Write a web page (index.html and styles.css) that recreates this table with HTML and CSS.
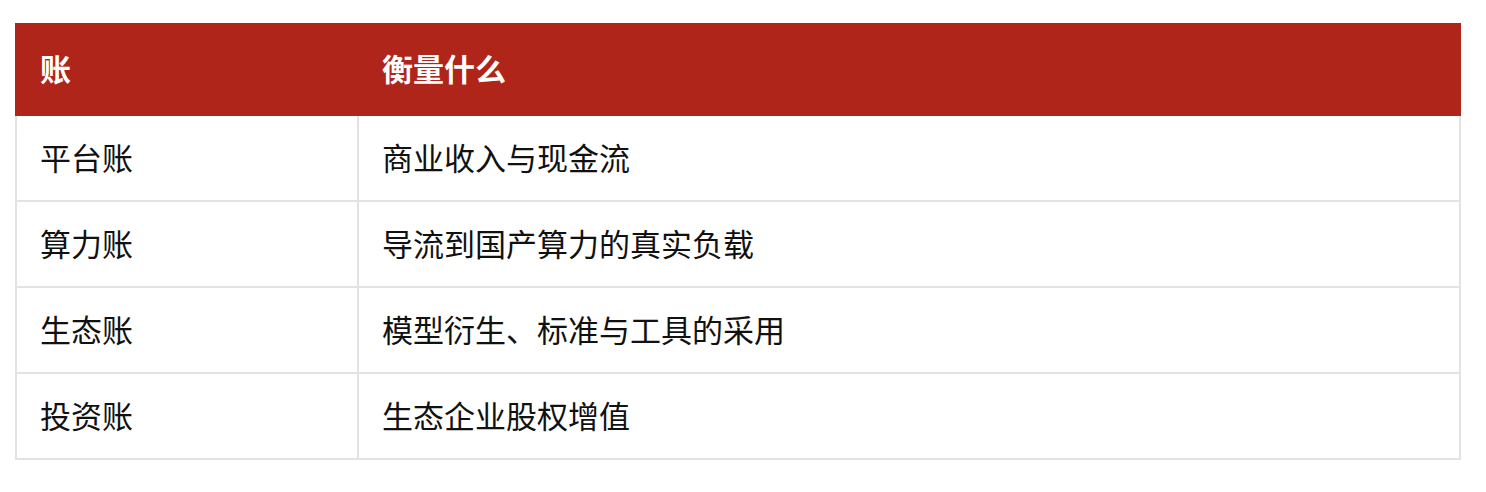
FILE: index.html
```html
<!DOCTYPE html>
<html lang="zh">
<head>
<meta charset="utf-8">
<link rel="stylesheet" href="styles.css">
</head>
<body>
<div class="wrap">
<table class="ledger">
  <thead>
    <tr><th class="c1">账</th><th>衡量什么</th></tr>
  </thead>
  <tbody>
    <tr><td class="c1">平台账</td><td>商业收入与现金流</td></tr>
    <tr><td class="c1">算力账</td><td>导流到国产算力的真实负载</td></tr>
    <tr><td class="c1">生态账</td><td>模型衍生、标准与工具的采用</td></tr>
    <tr><td class="c1">投资账</td><td>生态企业股权增值</td></tr>
  </tbody>
</table>
</div>
</body>
</html>
```
FILE: styles.css
```css
html, body {
  margin: 0;
  padding: 0;
  background: #ffffff;
}
.wrap {
  padding: 23px 25px 0 15px;
}
.ledger {
  width: 100%;
  border-collapse: collapse;
  font-family: "Noto Sans CJK SC", "Noto Sans", sans-serif;
  font-size: 31px;
  line-height: 1.2;
  color: #111111;
}
.ledger th {
  background: #b0251a;
  color: #ffffff;
  font-weight: 700;
  text-align: left;
  height: 91px;
  padding: 0 23px 4px;
  box-sizing: border-box;
  border: 2px solid #b0251a;
}
.ledger td {
  height: 86px;
  padding: 0 23px 3px;
  box-sizing: border-box;
  border: 2px solid #e3e3e3;
  vertical-align: middle;
}
.ledger .c1 {
  width: 342px;
}
```
